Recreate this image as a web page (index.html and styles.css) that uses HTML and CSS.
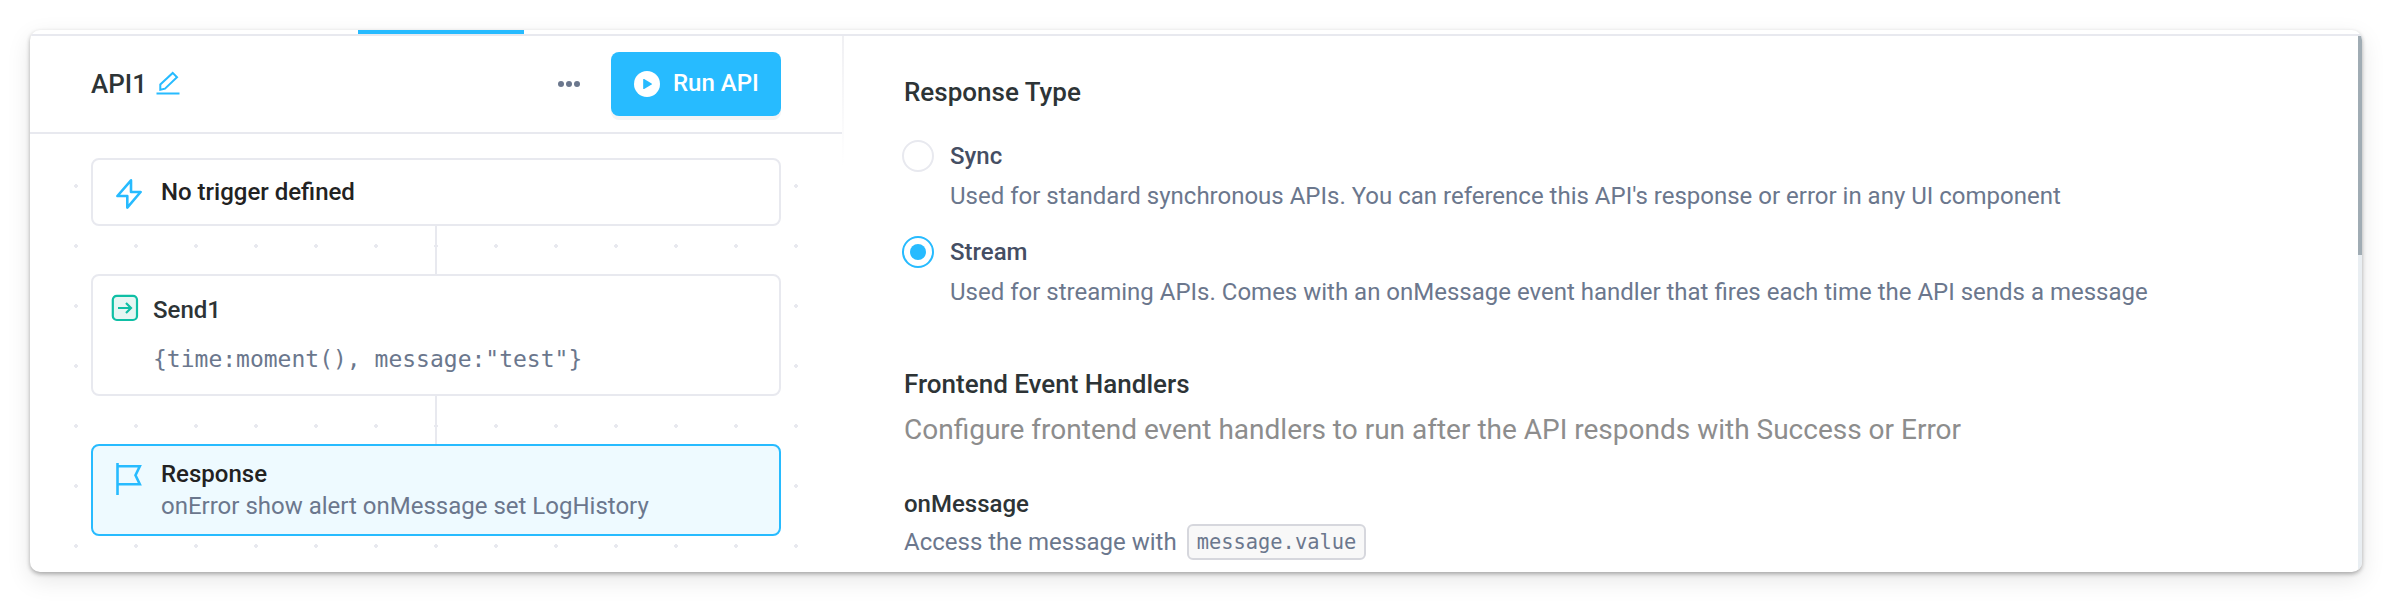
FILE: index.html
```html
<!DOCTYPE html>
<html lang="en">
<head>
    <meta charset="UTF-8">
    <meta name="viewport" content="width=device-width, initial-scale=1.0">
    <title>API1</title>
    <link rel="stylesheet" href="styles.css">
</head>
<body>
    <div class="window">
        <div class="tabs">
            <div class="tab-active"></div>
        </div>

        <div class="panes">
            <!-- left: api steps -->
            <section class="flow">
                <header class="flow-header">
                    <h1 class="api-name">API1</h1>
                    <svg class="edit-icon" width="24" height="25" viewBox="0 0 24 25" fill="none" stroke="#27bbff" stroke-width="2">
                        <path d="M4.3 18.7V13.5L16.7 1.9L21 6.2L9 17.7Z"/>
                        <path d="M0.5 22.5H23.5"/>
                    </svg>
                    <svg class="more-icon" width="22" height="6" viewBox="0 0 22 6" fill="#6b778d">
                        <circle cx="3" cy="3" r="3"/>
                        <circle cx="11" cy="3" r="3"/>
                        <circle cx="19" cy="3" r="3"/>
                    </svg>
                    <button class="run-button">
                        <svg width="26" height="26" viewBox="0 0 26 26">
                            <circle cx="13" cy="13" r="13" fill="#fff"/>
                            <path d="M9.2 8.6Q9.2 7.6 10.2 8.1L17.6 12.5Q18.3 13 17.6 13.5L10.2 17.9Q9.2 18.4 9.2 17.4Z" fill="#27bbff"/>
                        </svg>
                        <span class="run-label">Run API</span>
                    </button>
                </header>

                <div class="canvas">
                    <div class="card trigger">
                        <svg class="bolt-icon" width="26" height="30" viewBox="0 0 26 30" fill="none" stroke="#27bbff" stroke-width="2.6" stroke-linejoin="round">
                            <path d="M15 1.4L1.4 17H11.3V28.6L24.6 13H15Z"/>
                        </svg>
                        <p class="card-title">No trigger defined</p>
                    </div>
                    <div class="connector"></div>
                    <div class="card step">
                        <svg width="28" height="28" viewBox="0 0 28 28" fill="none" stroke="#0fbfa5" stroke-width="2.2">
                            <rect x="1.8" y="1.8" width="24.2" height="24.2" rx="4" fill="#e7f6f3"/>
                            <path d="M7 14H20M15 9L20 14L15 19"/>
                        </svg>
                        <div>
                            <p class="card-title step-title">Send1</p>
                            <p class="code">{time:moment(), message:"test"}</p>
                        </div>
                    </div>
                    <div class="connector"></div>
                    <div class="card response">
                        <svg class="flag-icon" width="26" height="32" viewBox="0 0 26 32" fill="none" stroke="#27bbff" stroke-width="2.6">
                            <path d="M1.5 0V32"/>
                            <path d="M1.5 3.3H23.8L19.5 12.3L23.8 21.3H1.5"/>
                        </svg>
                        <div>
                            <p class="card-title">Response</p>
                            <p class="card-text">onError show alert onMessage set LogHistory</p>
                        </div>
                    </div>
                </div>
            </section>

            <!-- right: response settings -->
            <section class="settings">
                <h2 class="heading">Response Type</h2>
                <div class="options">
                    <div class="option">
                        <span class="radio"></span>
                        <div class="option-body">
                            <p class="option-label">Sync</p>
                            <p class="option-text">Used for standard synchronous APIs. You can reference this API's response or error in any UI component</p>
                        </div>
                    </div>
                    <div class="option">
                        <span class="radio checked"></span>
                        <div class="option-body">
                            <p class="option-label">Stream</p>
                            <p class="option-text">Used for streaming APIs. Comes with an onMessage event handler that fires each time the API sends a message</p>
                        </div>
                    </div>
                </div>

                <h2 class="heading">Frontend Event Handlers</h2>
                <p class="subheading">Configure frontend event handlers to run after the API responds with Success or Error</p>

                <h3 class="event-name">onMessage</h3>
                <div class="event-text">
                    <span>Access the message with</span>
                    <code class="chip">message.value</code>
                </div>
            </section>

            <div class="scrollbar">
                <div class="thumb"></div>
            </div>
        </div>
    </div>
</body>
</html>
```

FILE: styles.css
```css
* {
    box-sizing: border-box;
    margin: 0;
    padding: 0;
}

body {
    padding: 30px;
    background-color: #fff;
    font-family: Roboto, sans-serif;
    font-size: 24px;
    line-height: 28px;
    white-space: nowrap;
    overflow: hidden;
}

.window {
    display: flex;
    flex-direction: column;
    width: 2332px;
    height: 542px;
    background-color: #fff;
    border-radius: 10px;
    overflow: hidden;
    box-shadow: 0 2px 4px rgba(0, 0, 0, 0.3), 0 8px 24px rgba(0, 0, 0, 0.1);
}

.tabs {
    height: 6px;
    padding-left: 328px;
    border-bottom: 2px solid #e8e9ef;
}

.tab-active {
    width: 166px;
    height: 4px;
    background-color: #27bbff;
}

.panes {
    display: flex;
    flex: 1;
}

.flow {
    display: flex;
    flex-direction: column;
    width: 812px;
}

.flow-header {
    display: flex;
    align-items: center;
    height: 98px;
    padding: 0 61px;
    border-bottom: 2px solid #e8e9ef;
}

.api-name {
    font-size: 26px;
    line-height: 30px;
    font-weight: 500;
    color: #2d3436;
}

.edit-icon {
    margin: 0 0 2px 9px;
}

.more-icon {
    margin-left: auto;
}

.run-button {
    display: flex;
    align-items: center;
    gap: 13px;
    width: 170px;
    height: 64px;
    margin-left: 31px;
    padding-left: 23px;
    border: none;
    border-radius: 8px;
    background-color: #27bbff;
    box-shadow: 0 4px 0 #f4f4f5;
    color: #fff;
    font-family: inherit;
    font-size: 24px;
    font-weight: 500;
}

.run-label {
    margin-bottom: 2px;
}

.canvas {
    flex: 1;
    padding: 24px 61px 0;
    background-image: radial-gradient(circle at 46px 52px, #e8e9ef 2px, transparent 2px);
    background-size: 60px 60px;
}

.card {
    display: flex;
    align-items: flex-start;
    width: 690px;
    border: 2px solid #e8e9ef;
    border-radius: 8px;
    background-color: #fff;
}

.connector {
    width: 2px;
    height: 48px;
    margin-left: 344px;
    background-color: #e8e9ef;
}

.card-title {
    font-weight: 500;
    color: #222;
}

.card-text {
    margin-top: 4px;
    color: #6b778d;
}

.trigger {
    gap: 19px;
    height: 68px;
    padding: 18px 23px;
}

.bolt-icon {
    margin-top: 1px;
}

.step {
    gap: 14px;
    height: 122px;
    padding: 18px;
}

.step-title {
    margin-top: 2px;
    color: #2d3436;
}

.code {
    margin-top: 21px;
    font-family: "DejaVu Sans Mono", monospace;
    font-size: 23px;
    color: #6b778d;
}

.response {
    gap: 19px;
    height: 92px;
    padding: 14px 23px;
    border-color: #27bbff;
    background-color: #eefaff;
}

.flag-icon {
    margin-top: 3px;
}

.settings {
    flex: 1;
    padding: 41px 0 0 62px;
    background: linear-gradient(#f0f0f3, #fff) no-repeat;
    background-size: 2px 130px;
}

.heading {
    font-size: 26px;
    line-height: 30px;
    font-weight: 500;
    color: #2d3436;
}

.options {
    display: flex;
    flex-direction: column;
    gap: 26px;
    margin: 33px 0 63px -2px;
}

.option {
    display: flex;
    gap: 16px;
}

.radio {
    width: 32px;
    height: 32px;
    border: 2px solid #e8e9ef;
    border-radius: 50%;
}

.radio.checked {
    padding: 6px;
    border-color: #27bbff;
    background-color: #27bbff;
    background-clip: content-box;
}

.option-body {
    padding-top: 2px;
}

.option-label {
    margin-bottom: 12px;
    font-weight: 500;
    color: #454e63;
}

.option-text {
    color: #6b778d;
}

.subheading {
    margin-top: 15px;
    font-size: 28px;
    line-height: 32px;
    color: #8d8d8d;
}

.event-name {
    margin-top: 44px;
    font-size: 24px;
    font-weight: 500;
    color: #2d3436;
}

.event-text {
    display: flex;
    align-items: center;
    gap: 10px;
    margin-top: 5px;
    color: #6b778d;
}

.chip {
    height: 36px;
    margin-top: 1px;
    padding: 0 8px;
    border: 2px solid #d6d7dd;
    border-radius: 6px;
    background-color: #f8f8f8;
    font-family: "DejaVu Sans Mono", monospace;
    font-size: 20.4px;
    line-height: 32px;
}

.scrollbar {
    width: 4px;
    background-color: #e9eef2;
}

.thumb {
    height: 219px;
    background-color: #a0acb4;
}
```
